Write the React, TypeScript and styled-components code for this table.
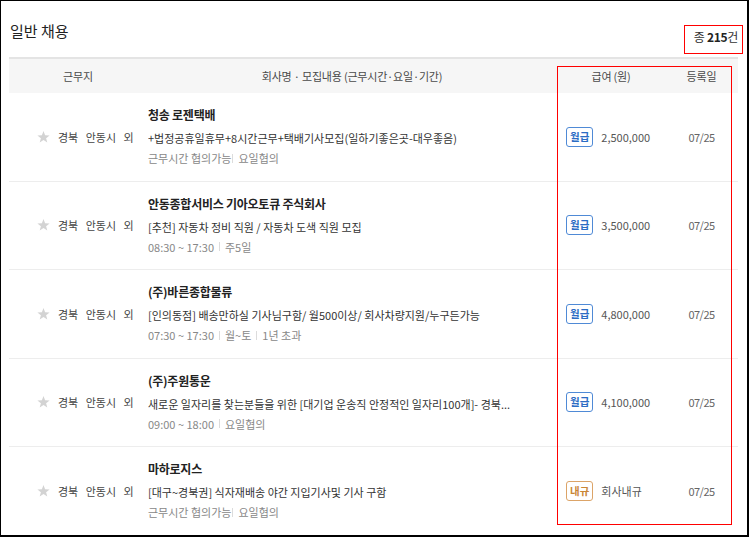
import React from "react";
import styled, { createGlobalStyle } from "styled-components";

const GlobalStyle = createGlobalStyle`
  html, body { margin: 0; padding: 0; background: #fff; }
  body { font-family: "Noto Sans CJK KR", "Noto Sans", sans-serif; }
  * { box-sizing: border-box; }
`;

const COLS = "138px 410px 108px 73px";

const Frame = styled.div`
  position: relative;
  width: 749px;
  height: 537px;
  border: 1px solid #000;
  border-right-width: 2px;
  border-bottom-width: 2px;
  padding: 0 9px 0 8px;
  overflow: hidden;
  background: #fff;
`;

const TitleRow = styled.div`
  display: flex;
  justify-content: space-between;
  align-items: flex-start;
  height: 56px;
`;

const Title = styled.h2`
  margin: 20px 0 0 1px;
  font-size: 15px;
  line-height: 20px;
  font-weight: 400;
  color: #222;
`;

const Count = styled.div`
  margin-top: 27px;
  font-size: 12px;
  line-height: 17px;
  color: #333;
  letter-spacing: -0.3px;
  strong { font-weight: 700; color: #222; }
`;

const HeaderRow = styled.div`
  display: grid;
  grid-template-columns: ${COLS};
  height: 36px;
  border-top: 2px solid #e4e4e4;
  background: #f6f6f6;
  align-items: center;
`;

const HeaderCell = styled.div`
  text-align: center;
  font-size: 11px;
  color: #4a4a4a;
  letter-spacing: -0.2px;
`;

const Row = styled.div`
  display: grid;
  grid-template-columns: ${COLS};
  height: 88.5px;
  align-items: center;
  border-bottom: 1px solid #ededed;
  &:last-child { border-bottom: none; }
`;

const LocationCell = styled.div`
  display: flex;
  align-items: center;
  gap: 8px;
  padding-left: 28px;
  font-size: 11px;
  color: #444;
  word-spacing: 5px;
  white-space: nowrap;
`;

const StarIcon = styled.svg`
  width: 13px;
  height: 12px;
  flex: none;
`;

const InfoCell = styled.div`
  padding: 0 20px 0 1px;
  min-width: 0;
  overflow: hidden;
`;

const Name = styled.div`
  font-size: 12px;
  font-weight: 700;
  line-height: 20px;
  margin-bottom: 3px;
  color: #222;
  letter-spacing: -0.25px;
`;

const Desc = styled.div`
  font-size: 11px;
  line-height: 20px;
  color: #333;
  white-space: nowrap;
  overflow: hidden;
  text-overflow: ellipsis;
`;

const Meta = styled.div`
  display: flex;
  align-items: center;
  font-size: 11px;
  line-height: 20px;
  color: #888;
  white-space: nowrap;
`;

const Sep = styled.span<{ $tight?: boolean }>`
  display: inline-block;
  width: 1px;
  height: 9px;
  background: #dcdcdc;
  margin: 0 5px 0 ${(p) => (p.$tight ? "1px" : "5px")};
`;

const PayCell = styled.div`
  display: flex;
  align-items: center;
  gap: 8px;
  padding-left: 9px;
`;

const Badge = styled.span<{ $tone: "blue" | "orange" }>`
  display: inline-flex;
  align-items: center;
  justify-content: center;
  height: 20px;
  padding: 0 3px;
  border: 1px solid ${(p) => (p.$tone === "blue" ? "#4f8ad6" : "#dca468")};
  border-radius: 3px;
  font-size: 10.5px;
  font-weight: 700;
  color: ${(p) => (p.$tone === "blue" ? "#2c6cc4" : "#c98636")};
  line-height: 1;
`;

const Amount = styled.span`
  font-size: 11px;
  color: #555;
`;

const DateCell = styled.div`
  text-align: center;
  font-size: 11px;
  color: #666;
  letter-spacing: -0.5px;
`;

const CountHighlight = styled.div`
  position: absolute;
  left: 683px;
  top: 24px;
  width: 59px;
  height: 29px;
  border: 1px solid #f00;
  pointer-events: none;
`;

const ColumnHighlight = styled.div`
  position: absolute;
  left: 556px;
  top: 65px;
  width: 175px;
  height: 459px;
  border: 1px solid #f00;
  pointer-events: none;
`;

type Job = {
  name: string;
  desc: string;
  meta: string[];
  tight?: boolean;
  pay: "월급" | "내규";
  amount: string;
  date: string;
};

const jobs: Job[] = [
  {
    name: "청송 로젠택배",
    desc: "+법정공휴일휴무+8시간근무+택배기사모집(일하기좋은곳-대우좋음)",
    meta: ["근무시간 협의가능", "요일협의"],
    tight: true,
    pay: "월급",
    amount: "2,500,000",
    date: "07/25",
  },
  {
    name: "안동종합서비스 기아오토큐 주식회사",
    desc: "[추천] 자동차 정비 직원 / 자동차 도색 직원 모집",
    meta: ["08:30 ~ 17:30", "주5일"],
    pay: "월급",
    amount: "3,500,000",
    date: "07/25",
  },
  {
    name: "(주)바른종합물류",
    desc: "[인의동점] 배송만하실 기사님구함/ 월500이상/ 회사차량지원/누구든가능",
    meta: ["07:30 ~ 17:30", "월~토", "1년 초과"],
    pay: "월급",
    amount: "4,800,000",
    date: "07/25",
  },
  {
    name: "(주)주원통운",
    desc: "새로운 일자리를 찾는분들을 위한 [대기업 운송직 안정적인 일자리100개]- 경북...",
    meta: ["09:00 ~ 18:00", "요일협의"],
    pay: "월급",
    amount: "4,100,000",
    date: "07/25",
  },
  {
    name: "마하로지스",
    desc: "[대구~경북권] 식자재배송 야간 지입기사및 기사 구함",
    meta: ["근무시간 협의가능", "요일협의"],
    tight: true,
    pay: "내규",
    amount: "회사내규",
    date: "07/25",
  },
];

const Star = () => (
  <StarIcon viewBox="0 0 13 12">
    <polygon
      points="6.5,0 8.1,4.2 12.6,4.4 9.1,7.2 10.3,11.6 6.5,9.1 2.7,11.6 3.9,7.2 0.4,4.4 4.9,4.2"
      fill="#d3d3d3"
    />
  </StarIcon>
);

export default function App() {
  return (
    <>
      <GlobalStyle />
      <Frame>
        <TitleRow>
          <Title>일반 채용</Title>
          <Count>
            종 <strong>215</strong>건
          </Count>
        </TitleRow>
        <HeaderRow>
          <HeaderCell>근무지</HeaderCell>
          <HeaderCell>회사명 · 모집내용 (근무시간·요일·기간)</HeaderCell>
          <HeaderCell>급여 (원)</HeaderCell>
          <HeaderCell>등록일</HeaderCell>
        </HeaderRow>
        {jobs.map((job) => (
          <Row key={job.name}>
            <LocationCell>
              <Star />
              <span>경북 안동시 외</span>
            </LocationCell>
            <InfoCell>
              <Name>{job.name}</Name>
              <Desc>{job.desc}</Desc>
              <Meta>
                {job.meta.map((m, i) => (
                  <React.Fragment key={m}>
                    {i > 0 && <Sep $tight={job.tight} />}
                    <span>{m}</span>
                  </React.Fragment>
                ))}
              </Meta>
            </InfoCell>
            <PayCell>
              <Badge $tone={job.pay === "월급" ? "blue" : "orange"}>{job.pay}</Badge>
              <Amount>{job.amount}</Amount>
            </PayCell>
            <DateCell>{job.date}</DateCell>
          </Row>
        ))}
        <CountHighlight />
        <ColumnHighlight />
      </Frame>
    </>
  );
}
